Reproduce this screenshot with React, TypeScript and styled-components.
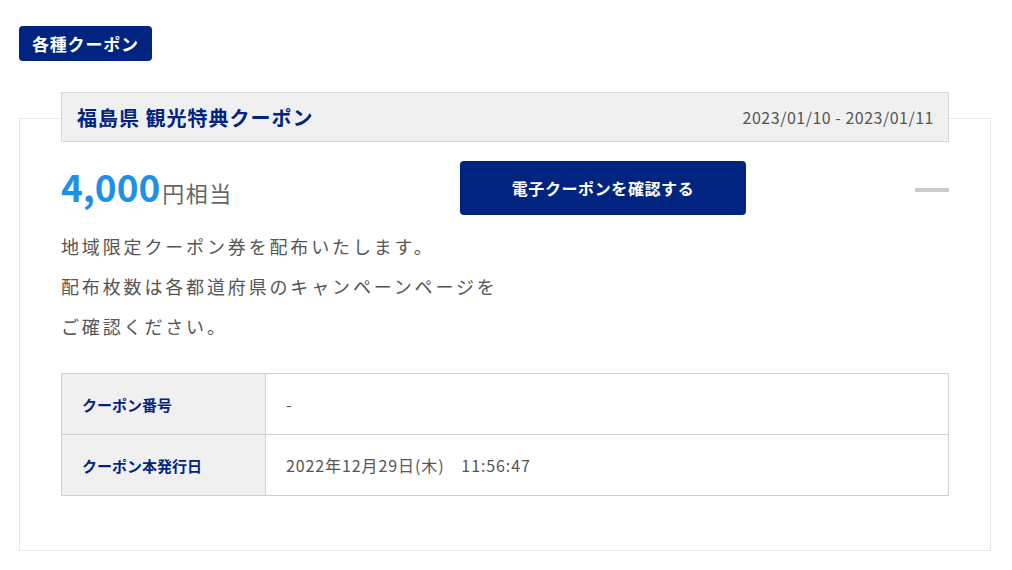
import styled, { createGlobalStyle } from "styled-components";

const GlobalStyle = createGlobalStyle`
  body {
    margin: 0;
    background: #ffffff;
    font-family: "Noto Sans CJK JP", "Noto Sans", sans-serif;
  }
`;

const Page = styled.div`
  padding: 26px 21px 20px 19px;
`;

const Badge = styled.div`
  display: inline-block;
  background: #012480;
  color: #fff;
  font-size: 17px;
  font-weight: 700;
  line-height: 35px;
  height: 35px;
  padding: 0 13px;
  border-radius: 4px;
  letter-spacing: 0.8px;
`;

const Card = styled.section`
  margin-top: 57px;
  border: 1px solid #e8e8e8;
  padding: 0 41px 54px 41px;
`;

const Header = styled.div`
  margin-top: -27px;
  height: 48px;
  background: #f0f0f0;
  border: 1px solid #d8d8d8;
  display: flex;
  align-items: center;
  justify-content: space-between;
  padding: 0 14px 0 15px;
`;

const Title = styled.h2`
  margin: 0;
  color: #012480;
  font-size: 20px;
  font-weight: 700;
  letter-spacing: 1px;
`;

const Period = styled.span`
  color: #555;
  font-size: 16px;
  letter-spacing: 0.5px;
`;

const PriceRow = styled.div`
  display: grid;
  grid-template-columns: 399px 286px 1fr;
  align-items: center;
  margin-top: 19px;
`;

const Price = styled.div`
  display: flex;
  align-items: baseline;
  color: #666;
`;

const Amount = styled.span`
  color: #1e90e6;
  font-size: 37px;
  font-weight: 700;
  line-height: 1;
`;

const Unit = styled.span`
  font-size: 22px;
  margin-left: 2px;
  letter-spacing: 1.5px;
`;

const Button = styled.button`
  height: 54px;
  background: #012480;
  color: #fff;
  border: none;
  border-radius: 4px;
  font-family: inherit;
  font-size: 16px;
  font-weight: 700;
  letter-spacing: 0.6px;
  cursor: pointer;
`;

const Toggle = styled.span`
  justify-self: end;
  width: 34px;
  height: 4px;
  margin-top: 4px;
  background: #cccccc;
`;

const Description = styled.p`
  margin: 11px 0 0 0;
  color: #555;
  font-size: 18px;
  line-height: 40px;
  letter-spacing: 2.85px;
`;

const Table = styled.table`
  margin-top: 27px;
  width: 100%;
  border-collapse: collapse;
  border: 1px solid #cfcfcf;
`;

const Row = styled.tr`
  height: 61px;
  border-top: 1px solid #cfcfcf;
`;

const Label = styled.th`
  width: 183px;
  background: #f0f0f0;
  border-right: 1px solid #cfcfcf;
  color: #012480;
  font-size: 15px;
  font-weight: 700;
  text-align: left;
  padding: 0 0 0 20px;
`;

const Value = styled.td`
  color: #555;
  font-size: 16px;
  letter-spacing: 0.9px;
  padding: 0 0 0 20px;
`;

export default function App() {
  return (
    <Page>
      <GlobalStyle />
      <Badge>各種クーポン</Badge>
      <Card>
        <Header>
          <Title>福島県 観光特典クーポン</Title>
          <Period>2023/01/10 - 2023/01/11</Period>
        </Header>
        <PriceRow>
          <Price>
            <Amount>4,000</Amount>
            <Unit>円相当</Unit>
          </Price>
          <Button>電子クーポンを確認する</Button>
          <Toggle />
        </PriceRow>
        <Description>
          地域限定クーポン券を配布いたします。
          <br />
          配布枚数は各都道府県のキャンペーンページを
          <br />
          ご確認ください。
        </Description>
        <Table>
          <tbody>
            <Row>
              <Label>クーポン番号</Label>
              <Value>-</Value>
            </Row>
            <Row>
              <Label>クーポン本発行日</Label>
              <Value>2022年12月29日(木)　11:56:47</Value>
            </Row>
          </tbody>
        </Table>
      </Card>
    </Page>
  );
}
